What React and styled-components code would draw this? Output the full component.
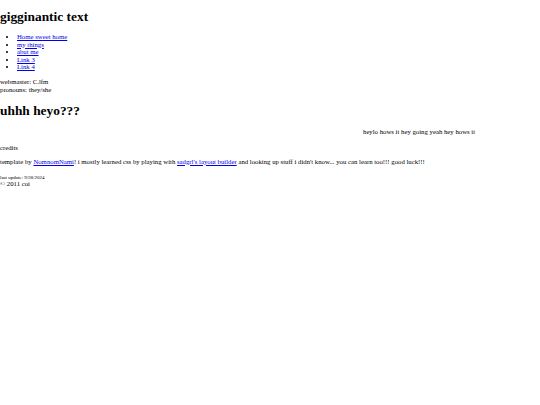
import React from "react";
import styled, { createGlobalStyle } from "styled-components";

const serif = `"Liberation Serif", "Times New Roman", serif`;

const Global = createGlobalStyle`
  html, body { margin: 0; padding: 0; background: #fff; }
  body { font-family: ${serif}; font-size: 6.75px; color: #000; }
`;

const Page = styled.div`
  display: flex;
  flex-direction: column;
  font-family: ${serif};
`;

const Title = styled.h1`
  font-family: ${serif};
  font-size: 13.4px;
  font-weight: 700;
  margin: 9px 0 8px;
  line-height: 16px;
`;

const Nav = styled.ul`
  margin: 0 0 7px;
  padding-left: 17px;
  line-height: 7.5px;
  list-style: disc;
`;

const Link = styled.a`
  color: #0000ee;
  text-decoration: underline;
`;

const Info = styled.div`
  line-height: 8px;
`;

const Heading = styled.h2`
  font-family: ${serif};
  font-size: 13.4px;
  font-weight: 700;
  margin: 9px 0 9px;
  line-height: 16px;
`;

const Blurb = styled.p`
  margin: 0 0 8px;
  padding-left: 363px;
  line-height: 8px;
`;

const Para = styled.p`
  margin: ${(p) => p.$m || "0"};
  line-height: 8px;
`;

const Small = styled.div`
  font-size: 5px;
  line-height: 5px;
`;

const Copy = styled.div`
  line-height: 8px;
`;

export default function App() {
  return (
    <Page>
      <Global />
      <Title>gigginantic text</Title>
      <Nav>
        <li><Link href="#">Home sweet home</Link></li>
        <li><Link href="#">my things</Link></li>
        <li><Link href="#">abut me</Link></li>
        <li><Link href="#">Link 3</Link></li>
        <li><Link href="#">Link 4</Link></li>
      </Nav>
      <Info>webmaster: C.lfm</Info>
      <Info>pronouns: they/she</Info>
      <Heading>uhhh heyo???</Heading>
      <Blurb>heylo hows it hey going yeah hey hows it</Blurb>
      <Para $m="0 0 6px">credits</Para>
      <Para $m="0 0 9px">
        template by <Link href="#">NomnomNami</Link>! i mostly learned css by playing with{" "}
        <Link href="#">sadgrl's layout builder</Link> and looking up stuff i didn't know... you can learn too!!! good luck!!!
      </Para>
      <Small>last update: 9/28/2024</Small>
      <Copy>© 2011 coi</Copy>
    </Page>
  );
}
